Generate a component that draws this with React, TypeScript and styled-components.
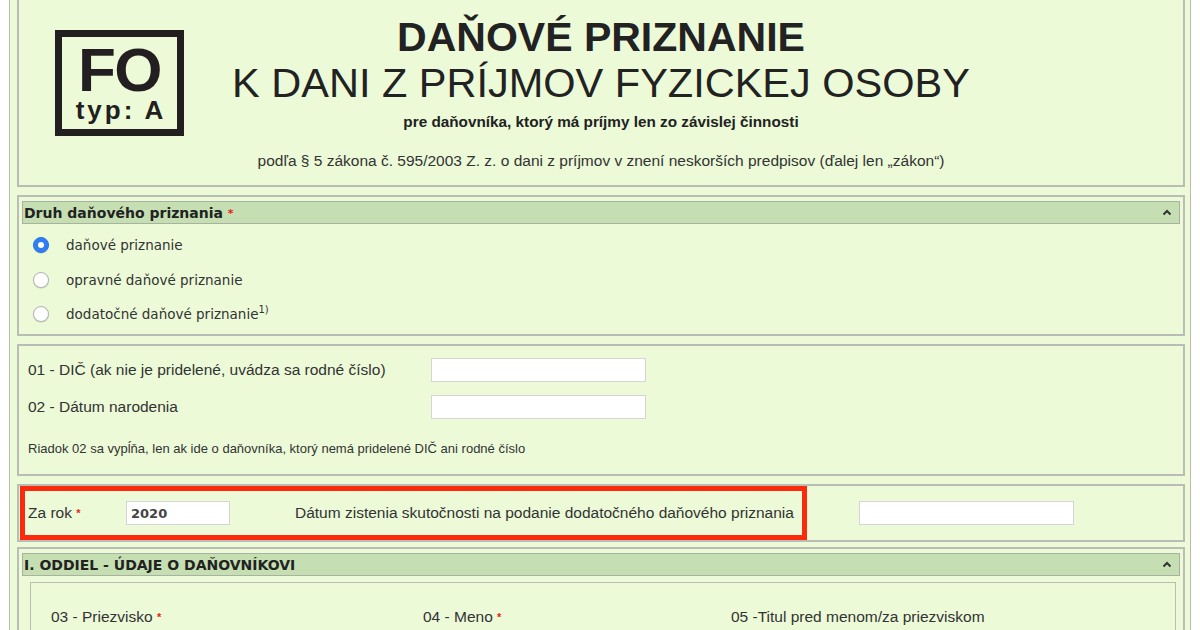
import React from 'react'
import styled, { createGlobalStyle } from 'styled-components'

const GlobalStyle = createGlobalStyle`
  body {
    margin: 0;
    background: #fff;
    color: #222;
    font-family: "Liberation Sans", Arial, sans-serif;
    overflow: hidden;
  }
`

const Star = () => <Req>*</Req>

const Chevron = () => (
  <svg width="10" height="7" viewBox="0 0 10 7">
    <polyline points="1.5,5.5 5,2 8.5,5.5" fill="none" stroke="#333" strokeWidth="2" />
  </svg>
)

const App = (): React.ReactElement => (
  <>
    <GlobalStyle />
    <Page>
      <HeaderPanel>
        <Logo>
          <span className="fo">FO</span>
          <span className="typ">typ: A</span>
        </Logo>
        <Titles>
          <h1>DAŇOVÉ PRIZNANIE</h1>
          <h2>K DANI Z PRÍJMOV FYZICKEJ OSOBY</h2>
          <p className="sub">pre daňovníka, ktorý má príjmy len zo závislej činnosti</p>
          <p className="law">
            podľa § 5 zákona č. 595/2003 Z. z. o dani z príjmov v znení neskorších predpisov (ďalej len „zákon“)
          </p>
        </Titles>
      </HeaderPanel>

      <Panel>
        <Bar>
          <span>
            Druh daňového priznania <Star />
          </span>
          <Chevron />
        </Bar>
        <RadioList>
          <RadioRow>
            <Radio $checked />
            daňové priznanie
          </RadioRow>
          <RadioRow>
            <Radio />
            opravné daňové priznanie
          </RadioRow>
          <RadioRow>
            <Radio />
            <span>
              dodatočné daňové priznanie<sup>1)</sup>
            </span>
          </RadioRow>
        </RadioList>
      </Panel>

      <Panel>
        <FieldGrid>
          <Label>01 - DIČ (ak nie je pridelené, uvádza sa rodné číslo)</Label>
          <TextInput />
          <Label>02 - Dátum narodenia</Label>
          <TextInput />
        </FieldGrid>
        <Note>Riadok 02 sa vypĺňa, len ak ide o daňovníka, ktorý nemá pridelené DIČ ani rodné číslo</Note>
      </Panel>

      <YearPanel>
        <Highlight>
          <Label className="year">
            Za rok <Star />
          </Label>
          <TextInput $width={104} $bold defaultValue="2020" />
          <Label className="date">Dátum zistenia skutočnosti na podanie dodatočného daňového priznania</Label>
        </Highlight>
        <TextInput />
      </YearPanel>

      <Panel>
        <Bar>
          <span>I. ODDIEL - ÚDAJE O DAŇOVNÍKOVI</span>
          <Chevron />
        </Bar>
        <InnerBox>
          <Label>
            03 - Priezvisko <Star />
          </Label>
          <Label>
            04 - Meno <Star />
          </Label>
          <Label>05 -Titul pred menom/za priezviskom</Label>
        </InnerBox>
      </Panel>
    </Page>
  </>
)

export default App

const Page = styled.div`
  margin: -12px 0 0 9px;
  width: 1182px;
  box-sizing: border-box;
  border: 1px solid #b7bcb1;
  border-top: none;
  background: #ecfad8;
  padding: 0 5px 0 7px;
`

const Panel = styled.section`
  border: 2px solid #babdb5;
  margin-bottom: 8px;
  padding: 4px 3px 4px;
`

const HeaderPanel = styled(Panel)`
  display: grid;
  grid-template-columns: 1fr auto 1fr;
  padding: 0;
  height: 199px;
  box-sizing: border-box;
`

const Logo = styled.div`
  align-self: start;
  justify-self: start;
  margin: 40px 0 0 36px;
  width: 129px;
  height: 106px;
  box-sizing: border-box;
  border: 7px solid #231f20;
  display: flex;
  flex-direction: column;
  align-items: center;
  padding-top: 9px;
  color: #231f20;
  font-weight: bold;

  .fo {
    font-size: 62px;
    line-height: 48px;
    letter-spacing: -1.5px;
  }

  .typ {
    font-size: 26px;
    line-height: 26px;
    letter-spacing: 3px;
    margin: 3px 0 0 3px;
  }
`

const Titles = styled.div`
  text-align: center;
  padding-top: 24px;

  h1,
  h2 {
    margin: 0;
    font-size: 41px;
    line-height: 46px;
    color: #222;
    white-space: nowrap;
  }

  h1 {
    font-weight: bold;
  }

  h2 {
    font-weight: normal;
    font-size: 41.5px;
  }

  p {
    margin: 0;
    font-size: 15.5px;
    line-height: 18px;
    white-space: nowrap;
  }

  .sub {
    font-weight: bold;
    font-size: 15.3px;
    margin-top: 6.5px;
  }

  .law {
    margin-top: 21px;
    color: #333;
  }
`

const Bar = styled.div`
  height: 23px;
  box-sizing: border-box;
  border: 1px solid #a9b2a2;
  background: #c5dfb3;
  display: flex;
  align-items: center;
  justify-content: space-between;
  padding: 0 7px 0 1px;
  font-family: "DejaVu Sans", Verdana, sans-serif;
  font-weight: bold;
  font-size: 14px;
  color: #222;
`

const Req = styled.span`
  color: #e8231a;
  font-size: 11px;
  font-weight: bold;
  vertical-align: 1px;
`

const RadioList = styled.div`
  margin-top: 4px;
  margin-bottom: -1.5px;
`

const RadioRow = styled.label`
  display: flex;
  align-items: center;
  gap: 17px;
  height: 34.5px;
  padding-left: 11px;
  font-family: "DejaVu Sans", Verdana, sans-serif;
  font-size: 13.5px;
  color: #333;

  sup {
    font-size: 10px;
    vertical-align: 6px;
    line-height: 0;
  }
`

const Radio = styled.span<{ $checked?: boolean }>`
  flex: none;
  width: 16px;
  height: 16px;
  border-radius: 50%;
  box-sizing: border-box;
  display: grid;
  place-items: center;
  background: ${(p) => (p.$checked ? '#2f7ef6' : '#fff')};
  border: 1px solid ${(p) => (p.$checked ? '#2a73e4' : '#b4b4b4')};
  box-shadow: 0 0.5px 1px rgba(0, 0, 0, 0.18);

  &::after {
    content: '';
    display: ${(p) => (p.$checked ? 'block' : 'none')};
    width: 6px;
    height: 6px;
    border-radius: 50%;
    background: #fff;
  }
`

const FieldGrid = styled.div`
  display: grid;
  grid-template-columns: 403px 215px;
  row-gap: 13px;
  align-items: center;
  padding: 8px 0 0 6px;
`

const Label = styled.span`
  font-size: 15.5px;
  color: #333;
  white-space: nowrap;

  &.year {
    width: 98px;
    flex: none;
  }

  &.date {
    margin-left: 65px;
  }
`

const TextInput = styled.input.attrs({ type: 'text' })<{ $width?: number; $bold?: boolean }>`
  width: ${(p) => p.$width ?? 215}px;
  height: 24px;
  box-sizing: border-box;
  border: 1px solid #d5d5d5;
  background: #fff;
  padding: 0 4px;
  margin: 0;
  font-family: "DejaVu Sans", Verdana, sans-serif;
  font-size: 13px;
  font-weight: ${(p) => (p.$bold ? 'bold' : 'normal')};
  color: #444;
  outline: none;
`

const Note = styled.p`
  margin: 22px 0 0 6px;
  font-size: 13px;
  line-height: 16px;
  color: #333;
  padding-bottom: 13px;
`

const YearPanel = styled(Panel)`
  display: flex;
  align-items: center;
  gap: 52px;
  padding: 0 1px;
  margin-bottom: 5px;
`

const Highlight = styled.div`
  display: flex;
  align-items: center;
  height: 54px;
  box-sizing: border-box;
  border: 5px solid #fb2a0c;
  padding: 0 8px 0 3px;
`

const InnerBox = styled.div`
  display: grid;
  grid-template-columns: 372px 308px 1fr;
  margin: 6px 4px 0 8px;
  height: 120px;
  padding: 25px 0 0 20px;
  border: 1px solid #babdb5;
`
